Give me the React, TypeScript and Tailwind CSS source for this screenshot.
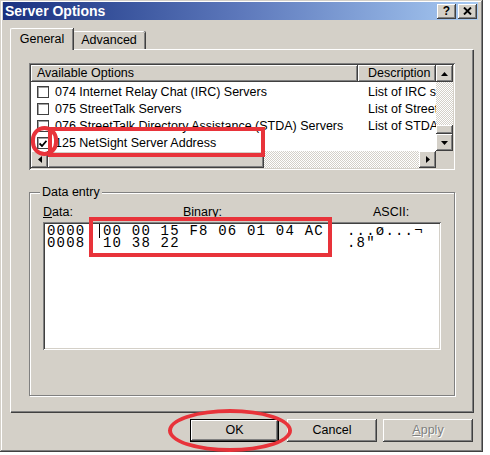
import React from "react";

const raised =
  "shadow-[inset_-1px_-1px_#404040,inset_1px_1px_#ffffff,inset_-2px_-2px_#808080,inset_2px_2px_#d4d0c8]";
const sunken =
  "shadow-[inset_1px_1px_#808080,inset_-1px_-1px_#ffffff,inset_2px_2px_#404040,inset_-2px_-2px_#d4d0c8]";
const headerCell = "shadow-[inset_-1px_-1px_#404040,inset_1px_1px_#ffffff,inset_-2px_-2px_#808080]";
const track =
  "bg-[repeating-conic-gradient(#d4d0c8_0%_25%,#ffffff_0%_50%)] bg-[length:2px_2px]";

const rows = [
  { checked: false, name: "074 Internet Relay Chat (IRC) Servers", desc: "List of IRC servers available" },
  { checked: false, name: "075 StreetTalk Servers", desc: "List of StreetTalk servers available" },
  { checked: false, name: "076 StreetTalk Directory Assistance (STDA) Servers", desc: "List of STDA servers available" },
  { checked: true, name: "125 NetSight Server Address", desc: "" },
];

function Arrow({ dir }: { dir: "up" | "down" | "left" | "right" }) {
  const pts = {
    up: "3.5,0 7,4 0,4",
    down: "0,0 7,0 3.5,4",
    left: "4,0 4,7 0,3.5",
    right: "0,0 4,3.5 0,7",
  }[dir];
  const vertical = dir === "up" || dir === "down";
  return (
    <svg width={vertical ? 7 : 4} height={vertical ? 4 : 7} viewBox={vertical ? "0 0 7 4" : "0 0 4 7"}>
      <polygon points={pts} fill="#000" />
    </svg>
  );
}

function ScrollBtn({ dir }: { dir: "up" | "down" | "left" | "right" }) {
  return (
    <div className={`w-[17px] h-[17px] shrink-0 bg-[#d4d0c8] flex items-center justify-center ${raised}`}>
      <Arrow dir={dir} />
    </div>
  );
}

function CheckBox({ checked }: { checked: boolean }) {
  return (
    <div className="w-[12px] h-[12px] shrink-0 bg-white border border-[#404040] shadow-[inset_1px_1px_#a0a0a0] flex items-center justify-center">
      {checked && (
        <svg width="8" height="7" viewBox="0 0 8 7">
          <path d="M0.5 3.5 L3 6 L7.5 0.8" stroke="#000" strokeWidth="1.8" fill="none" />
        </svg>
      )}
    </div>
  );
}

export default function App() {
  return (
    <div
      className="relative w-[490px] h-[455px] bg-white text-[12.5px] text-black"
      style={{ fontFamily: '"Liberation Sans", Arial, sans-serif' }}
    >
      {/* Dialog window */}
      <div className="w-[483px] h-[452px] bg-[#d4d0c8] flex flex-col pt-[2px] shadow-[inset_-1px_-1px_#404040,inset_1px_1px_#d4d0c8,inset_-2px_-2px_#808080,inset_2px_2px_#ffffff]">
        {/* Title bar */}
        <div className="ml-[3px] mr-[5px] h-[18px] flex items-center justify-between pl-[2px] pr-[1px] bg-linear-to-r from-[#1a3180] via-[#5d78bb] to-[#a8caf2]">
          <span className="text-white font-bold text-[14px] leading-none">Server Options</span>
          <div className="flex gap-[2px]">
            <div className={`w-[19px] h-[15px] bg-[#d4d0c8] flex items-center justify-center font-bold text-[12px] leading-none ${raised}`}>
              ?
            </div>
            <div className={`w-[19px] h-[15px] bg-[#d4d0c8] flex items-center justify-center ${raised}`}>
              <svg width="9" height="8" viewBox="0 0 9 8">
                <path d="M1 0.5 L8 7.5 M8 0.5 L1 7.5" stroke="#000" strokeWidth="1.9" />
              </svg>
            </div>
          </div>
        </div>

        {/* Tabs */}
        <div className="flex items-end h-[29px] pl-[10px]">
          <div className="relative z-10 -mb-px w-[63px] h-[22px] bg-[#d4d0c8] border-t border-l border-white rounded-tl-[2px] shadow-[inset_-1px_0_#808080,1px_0_#404040] flex items-center justify-center pb-[1px]">
            General
          </div>
          <div className="w-[72px] h-[18px] bg-[#d4d0c8] border-t border-white rounded-t-[2px] shadow-[inset_-1px_0_#808080,1px_0_#404040] flex items-center justify-center">
            Advanced
          </div>
        </div>

        {/* Tab panel */}
        <div className="mx-[10px] h-[363px] bg-[#d4d0c8] border-t border-l border-white shadow-[inset_-1px_-1px_#808080,1px_1px_#404040] pt-[13px] pl-[18px] pr-[18px]">
          {/* List view */}
          <div className={`h-[107px] bg-white p-[2px] flex flex-col ${sunken}`}>
            <div className="flex flex-1 min-h-0">
              <div className="flex-1 min-w-0 flex flex-col overflow-hidden">
                <div className="flex h-[17px] shrink-0">
                  <div className={`w-[327px] shrink-0 bg-[#d4d0c8] pl-[6px] flex items-center ${headerCell}`}>Available Options</div>
                  <div className={`flex-1 min-w-0 bg-[#d4d0c8] pl-[10px] flex items-center whitespace-nowrap overflow-hidden ${headerCell}`}>
                    Description
                  </div>
                </div>
                {rows.map((r) => (
                  <div key={r.name} className="flex h-[17px] shrink-0 items-center pt-[3px]">
                    <div className="w-[327px] shrink-0 pl-[6px] flex items-center gap-[6px] whitespace-nowrap overflow-hidden">
                      <CheckBox checked={r.checked} />
                      <span>{r.name}</span>
                    </div>
                    <div className="flex-1 min-w-0 pl-[10px] whitespace-nowrap overflow-hidden">{r.desc}</div>
                  </div>
                ))}
              </div>
              {/* vertical scrollbar */}
              <div className="w-[17px] shrink-0 flex flex-col">
                <ScrollBtn dir="up" />
                <div className={`flex-1 ${track}`} />
                <div className={`h-[9px] bg-[#d4d0c8] ${raised}`} />
                <ScrollBtn dir="down" />
              </div>
            </div>
            {/* horizontal scrollbar */}
            <div className="flex h-[17px] shrink-0">
              <ScrollBtn dir="left" />
              <div className={`w-[216px] bg-[#d4d0c8] ${raised}`} />
              <div className={`flex-1 ${track}`} />
              <ScrollBtn dir="right" />
              <div className="w-[17px] bg-[#d4d0c8]" />
            </div>
          </div>

          {/* Data entry group */}
          <div className="mt-[22px] h-[204px] border border-[#808080] shadow-[inset_1px_1px_#ffffff,1px_1px_#ffffff] px-[13px]">
            <div className="-mt-[8px] -ml-[3px] w-fit px-[2px] bg-[#d4d0c8] leading-[15px]">Data entry</div>
            <div className="mt-[5px] h-[15px] flex items-center leading-[15px]">
              <span className="w-[140px]">
                <span className="underline">D</span>ata:
              </span>
              <span className="w-[190px]">Binary:</span>
              <span>ASCII:</span>
            </div>
            <div
              className={`relative mt-[2px] h-[128px] bg-white p-[2px] pl-[4px] pt-[3px] text-[14px] leading-[12px] tracking-[1.2px] ${sunken}`}
              style={{ fontFamily: '"Liberation Mono", "Courier New", monospace' }}
            >
              <div className="flex whitespace-pre">
                <span className="w-[56px]">0000</span>
                <span className="w-[244px]">00 00 15 F8 06 01 04 AC</span>
                <span>...ø...¬</span>
              </div>
              <div className="flex whitespace-pre">
                <span className="w-[56px]">0008</span>
                <span className="w-[244px]">10 38 22</span>
                <span>.8"</span>
              </div>
              <div className="absolute left-[56px] top-[2px] w-px h-[14px] bg-black" />
            </div>
          </div>
        </div>

        {/* Buttons */}
        <div className="flex justify-end pr-[10px] mt-[7px]">
          <div className="w-[89px] h-[23px] border border-black bg-[#d4d0c8]">
            <div className={`w-full h-full flex items-center justify-center ${raised}`}>OK</div>
          </div>
          <div className={`ml-[8px] w-[90px] h-[23px] bg-[#d4d0c8] flex items-center justify-center ${raised}`}>Cancel</div>
          <div className={`ml-[6px] w-[90px] h-[23px] bg-[#d4d0c8] flex items-center justify-center text-[#808080] [text-shadow:1px_1px_#ffffff] ${raised}`}>
            <span>
              <span className="underline">A</span>pply
            </span>
          </div>
        </div>
      </div>

      {/* Red annotations */}
      <div className="absolute left-[31px] top-[126px] w-[27px] h-[30px] rounded-full border-[4px] border-[#e8333a]" />
      <div className="absolute left-[48px] top-[127px] w-[217px] h-[30px] border-[4px] border-[#e8333a]" />
      <div className="absolute left-[89px] top-[217px] w-[243px] h-[40px] border-[4px] border-[#e8333a]" />
      <div className="absolute left-[168px] top-[409px] w-[124px] h-[43px] rounded-[50%] border-[4px] border-[#e8333a]" />
    </div>
  );
}
